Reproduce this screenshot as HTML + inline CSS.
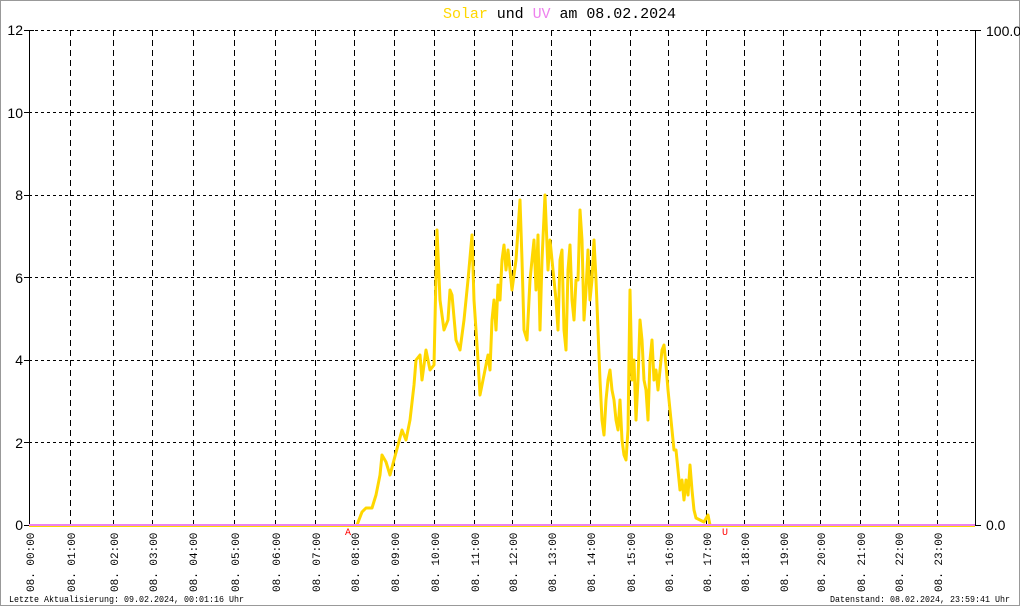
<!DOCTYPE html>
<html><head><meta charset="utf-8"><style>
html,body{margin:0;padding:0;background:#fff}
svg{display:block}
</style></head><body>
<svg width="1020" height="606" xmlns="http://www.w3.org/2000/svg" font-family="Liberation Mono, monospace">
<rect x="0.5" y="0.5" width="1019" height="605" fill="#fff" stroke="#999"/>
<text x="443" y="18" font-size="15" textLength="233" lengthAdjust="spacing" fill="#000"><tspan fill="#ffd700">Solar</tspan> und <tspan fill="#ee82ee">UV</tspan> am 08.02.2024</text>
<g stroke="#000" stroke-width="1" stroke-dasharray="3,3" fill="none">
<path d="M29 30.5H975M29 112.5H975M29 195.5H975M29 277.5H975M29 360.5H975M29 442.5H975"/>
<path d="M70.5 30V525M113.5 30V525M152.5 30V525M193.5 30V525M234.5 30V525M275.5 30V525M315.5 30V525M354.5 30V525M394.5 30V525M434.5 30V525M474.5 30V525M512.5 30V525M551.5 30V525M590.5 30V525M630.5 30V525M668.5 30V525M706.5 30V525M744.5 30V525M783.5 30V525M820.5 30V525M860.5 30V525M898.5 30V525M937.5 30V525" stroke-dasharray="6,4"/>
</g>
<g stroke="#000" stroke-width="1">
<path d="M29.5 30V526M975.5 30V526M24 30.5H34M24 112.5H29M24 195.5H29M24 277.5H29M24 360.5H29M24 442.5H29M24 525.5H29M970 30.5H981M975 525.5H981"/>
</g>
<g font-family="Liberation Sans, sans-serif" font-size="14" fill="#000" text-anchor="end">
<text x="23" y="35">12</text><text x="23" y="118">10</text><text x="23" y="200">8</text><text x="23" y="283">6</text><text x="23" y="365">4</text><text x="23" y="448">2</text><text x="23" y="530">0</text>
</g>
<g font-family="Liberation Sans, sans-serif" font-size="14" fill="#000">
<text x="986" y="36">100.0</text><text x="986" y="530">0.0</text>
</g>
<line x1="29" y1="526.5" x2="975" y2="526.5" stroke="#ffd700" stroke-width="1"/>
<polyline fill="none" stroke="#ffd700" stroke-width="3" stroke-linejoin="round" points="357,525 362,512 366,508 372,508 376,495 380,475 382,455 386,462 390,475 394,460 398,445 402,430 406,440 410,420 414,385 416,360 420,355 422,380 426,350 430,370 434,365 437,230 440,300 444,330 448,320 450,290 452,295 456,340 460,350 464,320 468,280 472,235 474,300 478,360 480,395 484,375 488,355 490,370 492,320 494,300 496,330 498,285 500,300 502,260 504,245 506,270 508,250 510,270 512,290 516,260 520,200 522,260 524,330 527,340 530,280 534,240 536,290 538,235 540,330 542,260 545,195 548,270 550,240 552,260 556,300 558,330 560,260 562,250 564,330 566,350 568,270 570,245 572,300 574,320 576,280 578,280 580,210 582,240 584,320 586,290 588,250 590,300 592,280 594,240 596,280 598,330 600,380 602,420 604,435 606,400 608,380 610,370 612,390 614,400 616,420 618,430 620,400 622,440 624,455 626,460 628,430 630,290 632,380 634,360 636,420 638,380 640,320 642,340 644,380 646,390 648,420 650,360 652,340 654,380 656,370 658,390 660,370 662,350 664,345 666,365 668,390 670,410 672,430 674,450 676,450 678,470 680,490 682,480 684,500 686,480 688,495 690,465 692,490 694,510 696,518 700,520 704,522 708,515 710,525"/>
<line x1="29" y1="525" x2="975" y2="525" stroke="#ee82ee" stroke-width="2"/>
<g font-size="10" fill="#f00"><text x="345" y="535">A</text><text x="722" y="535">U</text></g>
<g font-size="11" fill="#000">
<text transform="translate(34,592) rotate(-90)">08. 00:00</text>
<text transform="translate(75,592) rotate(-90)">08. 01:00</text>
<text transform="translate(118,592) rotate(-90)">08. 02:00</text>
<text transform="translate(157,592) rotate(-90)">08. 03:00</text>
<text transform="translate(197,592) rotate(-90)">08. 04:00</text>
<text transform="translate(239,592) rotate(-90)">08. 05:00</text>
<text transform="translate(280,592) rotate(-90)">08. 06:00</text>
<text transform="translate(320,592) rotate(-90)">08. 07:00</text>
<text transform="translate(359,592) rotate(-90)">08. 08:00</text>
<text transform="translate(399,592) rotate(-90)">08. 09:00</text>
<text transform="translate(439,592) rotate(-90)">08. 10:00</text>
<text transform="translate(479,592) rotate(-90)">08. 11:00</text>
<text transform="translate(517,592) rotate(-90)">08. 12:00</text>
<text transform="translate(556,592) rotate(-90)">08. 13:00</text>
<text transform="translate(595,592) rotate(-90)">08. 14:00</text>
<text transform="translate(635,592) rotate(-90)">08. 15:00</text>
<text transform="translate(673,592) rotate(-90)">08. 16:00</text>
<text transform="translate(711,592) rotate(-90)">08. 17:00</text>
<text transform="translate(749,592) rotate(-90)">08. 18:00</text>
<text transform="translate(788,592) rotate(-90)">08. 19:00</text>
<text transform="translate(825,592) rotate(-90)">08. 20:00</text>
<text transform="translate(865,592) rotate(-90)">08. 21:00</text>
<text transform="translate(903,592) rotate(-90)">08. 22:00</text>
<text transform="translate(942,592) rotate(-90)">08. 23:00</text>
</g>
<g font-size="9" fill="#000">
<text x="9" y="602" textLength="235" lengthAdjust="spacingAndGlyphs">Letzte Aktualisierung: 09.02.2024, 00:01:16 Uhr</text>
<text x="830" y="602" textLength="180" lengthAdjust="spacingAndGlyphs">Datenstand: 08.02.2024, 23:59:41 Uhr</text>
</g>
</svg>
</body></html>
